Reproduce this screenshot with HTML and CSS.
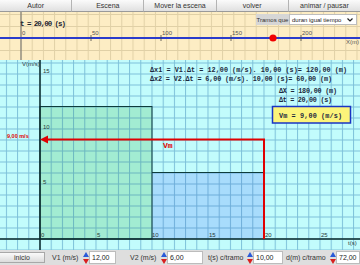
FILE: index.html
```html
<!DOCTYPE html>
<html>
<head>
<meta charset="UTF-8">
<title>Velocidad media</title>
<link rel="stylesheet" href="styles.css">
</head>
<body>
<div class="app">
  <div class="menu">
    <div class="menu-btn">Autor</div>
    <div class="menu-btn">Escena</div>
    <div class="menu-btn">Mover la escena</div>
    <div class="menu-btn">volver</div>
    <div class="menu-btn">animar / pausar</div>
  </div>

  <!-- recta de posiciones -->
  <div class="track">
    <svg width="360" height="48" viewBox="0 0 360 48">
      <defs>
        <pattern id="tgrid" width="11.2" height="12" patternUnits="userSpaceOnUse" x="9.3" y="2">
          <path d="M0.5 0V12M0 0.5H11.2" stroke="#e0d0a6" stroke-width="1" fill="none"/>
        </pattern>
      </defs>
      <rect width="360" height="48" fill="#fdedc4"/>
      <rect width="360" height="48" fill="url(#tgrid)"/>
      <line x1="21" y1="0" x2="21" y2="48" stroke="#6a6a6a" stroke-width="1"/>
      <text class="t-now" x="20" y="13.5" textLength="46">t = 20,00 (s)</text>
      <line x1="0" y1="26" x2="360" y2="26" stroke="#2a3ccc" stroke-width="2"/>
      <g stroke="#444" stroke-width="0.8">
        <line x1="91" y1="23" x2="91" y2="29"/>
        <line x1="161" y1="23" x2="161" y2="29"/>
        <line x1="231" y1="23" x2="231" y2="29"/>
        <line x1="301" y1="23" x2="301" y2="29"/>
      </g>
      <g class="tick-label">
        <text x="22" y="23">0</text>
        <text x="92" y="23">50</text>
        <text x="162" y="23">100</text>
        <text x="232" y="23">150</text>
        <text x="302" y="23">200</text>
        <text x="346" y="32">X(m)</text>
      </g>
      <circle cx="273" cy="26" r="3.6" fill="#f00000"/>
    </svg>
    <div class="tramos">
      <span class="tramos-label">Tramos que</span>
      <span class="tramos-select">duran igual tiempo
        <svg width="6" height="4" viewBox="0 0 6 4"><path d="M0.5 0.5L3 3L5.5 0.5" stroke="#222" stroke-width="1.2" fill="none"/></svg>
      </span>
    </div>
  </div>

  <!-- grafica v-t -->
  <div class="graph">
    <svg width="360" height="190" viewBox="0 0 360 190">
      <defs>
        <pattern id="ggrid" width="11.2" height="11" patternUnits="userSpaceOnUse" x="-5.3" y="2.5">
          <path d="M0.5 0V11M0 0.5H11.2" stroke="rgba(30,110,170,0.42)" stroke-width="1" fill="none"/>
        </pattern>
      </defs>
      <rect width="360" height="190" fill="#c2fcfc"/>
      <rect x="40" y="46.5" width="112" height="132.5" fill="#a2ecd2"/>
      <rect x="152" y="112.5" width="112" height="66.5" fill="#a8dcfc"/>
      <rect width="360" height="190" fill="url(#ggrid)"/>
      <rect x="40" y="46.5" width="112" height="132.5" fill="none" stroke="#0e3c3c" stroke-width="1"/>
      <line x1="152" y1="112.5" x2="264" y2="112.5" stroke="#0e3c3c" stroke-width="1"/>

      <line x1="40" y1="0" x2="40" y2="190" stroke="#0a2a2a" stroke-width="1.5"/>
      <line x1="0" y1="179" x2="360" y2="179" stroke="#0a2a2a" stroke-width="1.5"/>

      <g class="axis-label">
        <text x="22" y="6">V(m/s)</text>
        <text x="43" y="13">15</text>
        <text x="43" y="68.5">10</text>
        <text x="43" y="124">5</text>
        <text x="41" y="177">0</text>
        <text x="97" y="177">5</text>
        <text x="152" y="177">10</text>
        <text x="209" y="177">15</text>
        <text x="265" y="177">20</text>
        <text x="321" y="177">25</text>
        <text x="348" y="185">t(s)</text>
      </g>

      <path d="M264 179V79.5H46" stroke="#e00000" stroke-width="2" fill="none"/>
      <polygon points="40,79.5 48,75.5 48,83.5" fill="#e00000"/>
      <text class="red-small" x="7" y="78">9,00 m/s</text>
      <text class="red-vm" x="163" y="88">Vm</text>

      <g class="formula">
        <text x="150" y="11.5" textLength="197">&#916;x1 = V1.&#916;t = 12,00 (m/s). 10,00 (s)= 120,00 (m)</text>
        <text x="150" y="20.5" textLength="182">&#916;x2 = V2.&#916;t = 6,00 (m/s). 10,00 (s)= 60,00 (m)</text>
        <text x="279" y="32.5" textLength="58">&#916;X = 180,00 (m)</text>
        <text x="279" y="41.5" textLength="53">&#916;t = 20,00 (s)</text>
      </g>
      <rect x="272.5" y="46.5" width="78" height="16.5" fill="#fcf47a" stroke="#1a34c4" stroke-width="1.5"/>
      <text class="formula" x="279" y="57.5" textLength="63">Vm = 9,00 (m/s)</text>
    </svg>
  </div>

  <div class="controls">
    <div class="btn-inicio">inicio</div>

    <span class="ctl-label lbl-v1">V1 (m/s)</span>
    <span class="spin"><svg width="6" height="12" viewBox="0 0 6 12"><polygon points="3,0 6,5 0,5" fill="#2a5ad8"/><polygon points="0,7 6,7 3,12" fill="#d82020"/></svg></span>
    <span class="ctl-input in-v1">12,00</span>

    <span class="ctl-label lbl-v2">V2 (m/s)</span>
    <span class="spin"><svg width="6" height="12" viewBox="0 0 6 12"><polygon points="3,0 6,5 0,5" fill="#2a5ad8"/><polygon points="0,7 6,7 3,12" fill="#d82020"/></svg></span>
    <span class="ctl-input in-v2">6,00</span>

    <span class="ctl-label lbl-t">t(s) c/tramo</span>
    <span class="spin"><svg width="6" height="12" viewBox="0 0 6 12"><polygon points="3,0 6,5 0,5" fill="#2a5ad8"/><polygon points="0,7 6,7 3,12" fill="#d82020"/></svg></span>
    <span class="ctl-input in-t">10,00</span>

    <span class="ctl-label lbl-d">d(m) c/tramo</span>
    <span class="spin"><svg width="6" height="12" viewBox="0 0 6 12"><polygon points="3,0 6,5 0,5" fill="#2a5ad8"/><polygon points="0,7 6,7 3,12" fill="#d82020"/></svg></span>
    <span class="ctl-input in-d">72,00</span>
  </div>
</div>
</body>
</html>
```

FILE: styles.css
```css
body{
    margin:0;
    padding:0;
    background:#fff;
    font-family:"Liberation Sans", Arial, sans-serif;
}
.app{
    width:360px;
    height:265px;
    display:flex;
    flex-direction:column;
    overflow:hidden;
}

/* botones de arriba */
.menu{
    display:flex;
    height:12px;
}
.menu-btn{
    flex:1;
    display:flex;
    align-items:center;
    justify-content:center;
    box-sizing:border-box;
    font-size:7px;
    color:#333;
    background:linear-gradient(#fbfbfb, #e0e0e0);
    border-right:1px solid #b4b4b4;
    border-bottom:1px solid #9a9a9a;
}
.menu-btn:last-child{
    border-right:none;
}

/* recta */
.track{
    position:relative;
    height:48px;
}
.track svg, .graph svg{
    display:block;
}
.t-now{
    font-family:"Liberation Mono", "DejaVu Sans Mono", monospace;
    font-weight:bold;
    font-size:7.5px;
    fill:#1c2430;
}
.tick-label text{
    font-family:"Liberation Sans", Arial, sans-serif;
    font-size:6px;
    fill:#555;
}
.tramos{
    position:absolute;
    top:2px;
    left:256px;
    display:flex;
    height:11px;
}
.tramos-label{
    width:33px;
    display:flex;
    align-items:center;
    justify-content:center;
    background:#d6d6d6;
    font-size:6px;
    color:#333;
}
.tramos-select{
    width:68px;
    box-sizing:border-box;
    display:flex;
    align-items:center;
    justify-content:space-between;
    padding:0 3px 0 2px;
    background:#fff;
    border:1px solid #bdbdbd;
    font-size:6px;
    color:#222;
}

/* grafica */
.graph{
    height:190px;
}
.axis-label text{
    font-family:"Liberation Sans", Arial, sans-serif;
    font-size:6px;
    fill:#2a3a3a;
}
.formula, .formula text{
    font-family:"Liberation Mono", "DejaVu Sans Mono", monospace;
    font-weight:bold;
    font-size:6.8px;
    fill:#1c2840;
}
.red-small{
    font-family:"Liberation Sans", Arial, sans-serif;
    font-weight:bold;
    font-size:5.5px;
    fill:#e00000;
}
.red-vm{
    font-family:"Liberation Mono", "DejaVu Sans Mono", monospace;
    font-weight:bold;
    font-size:8px;
    fill:#e00000;
}

/* controles de abajo */
.controls{
    height:15px;
    display:flex;
    align-items:center;
    background:#dedede;
    font-size:7px;
    color:#333;
}
.btn-inicio{
    width:45px;
    height:11px;
    box-sizing:border-box;
    display:flex;
    align-items:center;
    justify-content:center;
    background:linear-gradient(#fafafa, #dcdcdc);
    border:1px solid #a8a8a8;
    border-left:none;
}
.ctl-label{
    box-sizing:border-box;
    white-space:nowrap;
}
.lbl-v1{ width:38px; padding-left:7px; }
.lbl-v2{ width:45px; padding-left:14px; }
.lbl-t{ width:44px; padding-left:5px; }
.lbl-d{ width:47px; padding-left:3px; }
.spin{
    width:6px;
    height:12px;
    display:flex;
}
.ctl-input{
    height:13px;
    box-sizing:border-box;
    display:flex;
    align-items:center;
    padding-left:2px;
    background:#fff;
    border:1px solid #bcbcbc;
    color:#222;
}
.in-v1{ width:27px; }
.in-v2{ width:36px; }
.in-t{ width:30px; }
.in-d{ width:24px; }
```
